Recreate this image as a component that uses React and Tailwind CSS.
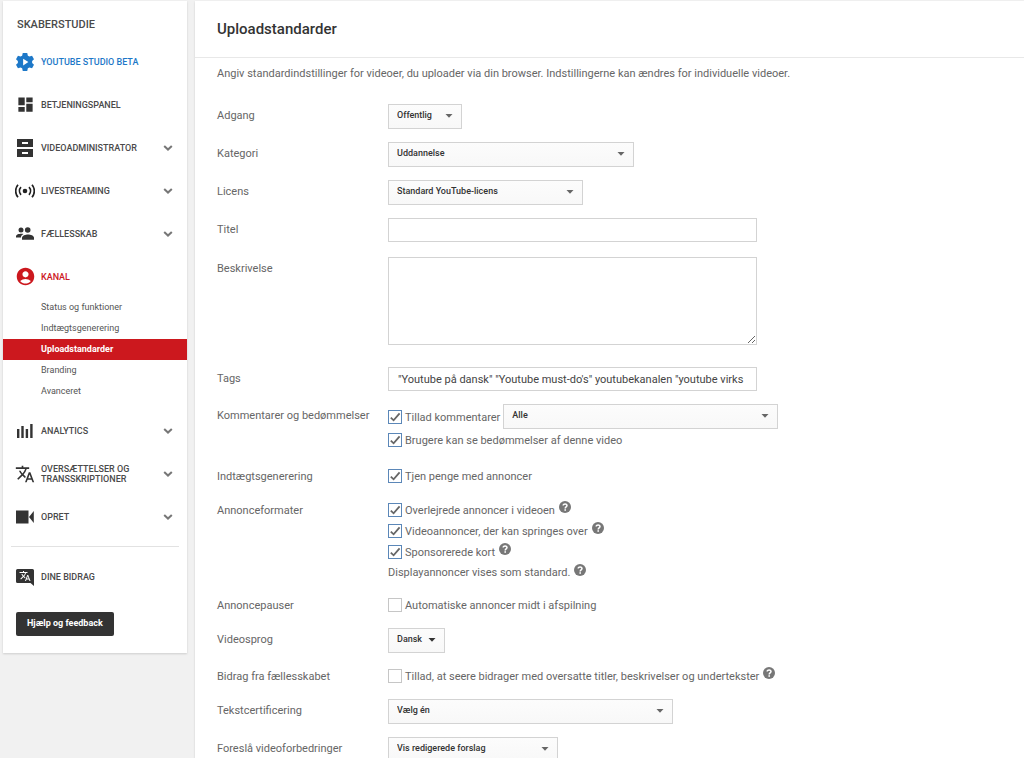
import { useState } from "react";
import { MdAccountCircle, MdDashboard, MdTranslate } from "react-icons/md";

function StudioIcon() {
  return (
    <svg viewBox="0 0 24 24" className="h-[18px] w-[18px]" fill="currentColor">
      <path fillRule="evenodd" d="M9 0h6l.8 3.600 2.100 1.200L21.400 3.700l2.600 4.600-2.500 2.500v2.400l2.500 2.500-2.600 4.600-3.500-1.100-2.100 1.200L15 24H9l-.8-3.600-2.100-1.200-3.500 1.100L0 15.700l2.500-2.500v-2.400L0 8.300l2.600-4.600 3.500 1.100 2.100-1.200zM9.500 7.500v9l7-4.500z" />
    </svg>
  );
}

function DrawersIcon() {
  return (
    <svg viewBox="0 0 18 18" className="h-[18px] w-[18px] text-[#333]" fill="currentColor">
      <path fillRule="evenodd" d="M1 0h16v8H1zM6 3v2h6V3zM1 10h16v8H1zM6 13v2h6v-2z" />
    </svg>
  );
}

function LiveIcon() {
  return (
    <svg viewBox="0 0 20 14" className="h-[14px] w-[20px] shrink-0 text-[#222]" fill="none" stroke="currentColor" strokeWidth="1.700">
      <circle cx="10" cy="7" r="2.300" fill="currentColor" stroke="none" />
      <path d="M6 3.200a5.600 5.600 0 0 0 0 7.600M14 3.200a5.600 5.600 0 0 1 0 7.600M3 .8a9.400 9.400 0 0 0 0 12.400M17 .8a9.400 9.400 0 0 1 0 12.400" />
    </svg>
  );
}

function PeopleIcon() {
  return (
    <svg viewBox="0 0 18 13" className="h-[13px] w-[18px] text-[#333]" fill="currentColor">
      <circle cx="5" cy="3" r="2.500" />
      <circle cx="11.700" cy="3" r="2.800" />
      <path d="M0 10.500V9.300C0 7.600 3 6.800 5.200 6.800c.8 0 1.600.1 2.300.3C5.900 7.900 5 9 5 10.500z" />
      <path d="M6 12.800v-2C6 8.600 9.500 7.400 12 7.400s6 1.200 6 3.400v2z" />
    </svg>
  );
}

function BarsIcon() {
  return (
    <svg viewBox="0 0 18 14" className="h-[14px] w-[18px] text-[#333]" fill="currentColor">
      <path d="M1 5h2.400v9H1zM5.300 2h2.400v12H5.300zM9.700 5h2.400v9H9.700zM14.200 0h2.400v14h-2.400z" />
    </svg>
  );
}

function CameraIcon() {
  return (
    <svg viewBox="0 0 18 14" className="h-[14px] w-[18px] text-[#333]" fill="currentColor">
      <path d="M0 .5h12.500v13H0zM13 7l4.800-6v12z" />
    </svg>
  );
}

function ContributionIcon() {
  return (
    <span className="relative block h-[18px] w-[18px] text-[#333]">
      <svg viewBox="0 0 18 18" className="h-[18px] w-[18px]" fill="currentColor">
        <path d="M1.500 1h15A1.500 1.500 0 0 1 18 2.500V18l-3.500-3h-13A1.500 1.500 0 0 1 0 13.500v-11A1.500 1.500 0 0 1 1.500 1z" />
      </svg>
      <MdTranslate className="absolute left-[3px] top-[2px] h-3 w-3 text-white" />
    </span>
  );
}

function Chevron() {
  return (
    <svg viewBox="0 0 10 6" className="ml-auto h-[6px] w-[10px] shrink-0" fill="none" stroke="#777" strokeWidth="2">
      <path d="M1.200 1l3.800 3.600L8.800 1" />
    </svg>
  );
}

function NavItem({ icon, label, expandable, className = "text-[#4a4a4a]" }) {
  return (
    <a href="#" className={`flex h-[43px] items-center pl-[13px] pr-[14px] ${className}`}>
      <span className="mr-[7px] flex w-[18px] shrink-0 justify-center">{icon}</span>
      <span className="text-[9px] font-medium leading-[10px]">{label}</span>
      {expandable && <Chevron />}
    </a>
  );
}

const channelPages = ["Status og funktioner", "Indtægtsgenerering", "Uploadstandarder", "Branding", "Avanceret"];

function Sidebar() {
  return (
    <nav className="ml-[3px] mt-px w-[184px] shrink-0 self-start bg-white pb-[17px] shadow-[0_1px_2px_rgba(0,0,0,0.15)]">
      <h2 className="flex h-[39px] items-center pl-[14px] pt-[10px] text-[11px] font-medium text-[#4a4a4a]">SKABERSTUDIE</h2>
      <NavItem icon={<StudioIcon />} label="YOUTUBE STUDIO BETA" className="text-[#1d78c8]" />
      <NavItem icon={<MdDashboard className="h-[19px] w-[19px] shrink-0 text-[#333]" />} label="BETJENINGSPANEL" />
      <NavItem icon={<DrawersIcon />} label="VIDEOADMINISTRATOR" expandable />
      <NavItem icon={<LiveIcon />} label="LIVESTREAMING" expandable />
      <NavItem icon={<PeopleIcon />} label="FÆLLESSKAB" expandable />
      <NavItem icon={<MdAccountCircle className="h-[21px] w-[21px] shrink-0" />} label="KANAL" className="text-[#cc181e]" />
      <ul className="-mt-px mb-[7px]">
        {channelPages.map((page) => (
          <li key={page}>
            <a
              href="#"
              className={`block h-[21px] pl-[38px] text-[9px] leading-[21px] ${
                page === "Uploadstandarder" ? "bg-[#cc181e] font-bold text-white" : "text-[#555]"
              }`}
            >
              {page}
            </a>
          </li>
        ))}
      </ul>
      <NavItem icon={<BarsIcon />} label="ANALYTICS" expandable />
      <NavItem icon={<MdTranslate className="h-[20px] w-[20px] shrink-0 text-[#333]" />} label="OVERSÆTTELSER OG TRANSSKRIPTIONER" expandable />
      <NavItem icon={<CameraIcon />} label="OPRET" expandable />
      <hr className="mx-2 my-2 border-[#e2e2e2]" />
      <NavItem icon={<ContributionIcon />} label="DINE BIDRAG" />
      <button className="ml-[13px] mt-[14px] block h-6 rounded-[2px] bg-[#333] px-[11px] text-[9px] font-bold text-white">Hjælp og feedback</button>
    </nav>
  );
}

function Row({ label, htmlFor, className = "mt-[13px]", children }) {
  return (
    <div className={`flex items-start ${className}`}>
      <label htmlFor={htmlFor} className="w-[171px] shrink-0 leading-6">{label}</label>
      <div>{children}</div>
    </div>
  );
}

function Select({ id, value, label, className, arrow = "text-[#666]" }) {
  return (
    <div className={`relative h-[25px] ${className}`}>
      <select
        id={id}
        aria-label={label}
        className="block h-full w-full appearance-none border border-[#d3d3d3] bg-linear-to-b from-[#fcfcfc] to-[#f8f8f8] pb-px pl-2 text-[9px] font-medium text-[#333]"
      >
        <option>{value}</option>
      </select>
      <svg viewBox="0 0 8 4" className={`pointer-events-none absolute right-[9px] top-[10px] h-1 w-2 ${arrow}`} fill="currentColor">
        <path d="M.5 0h7L4 3.700z" />
      </svg>
    </div>
  );
}

function Check({ id, label, initial = false }) {
  const [checked, setChecked] = useState(initial);
  return (
    <label className="flex items-center gap-[3px]">
      <span className="relative block h-[14px] w-[14px]">
        <input
          id={id}
          type="checkbox"
          checked={checked}
          onChange={() => setChecked(!checked)}
          className="block h-[14px] w-[14px] appearance-none border border-[#c6c6c6] bg-white checked:border-[#5b87b8]"
        />
        {checked && (
          <svg viewBox="0 0 14 14" className="pointer-events-none absolute inset-0 h-[14px] w-[14px]" fill="none" stroke="#666" strokeWidth="1.800">
            <path d="M2.800 7.600l2.800 2.700 6-7" />
          </svg>
        )}
      </span>
      <span className="pt-[2px] leading-4">{label}</span>
    </label>
  );
}

function Help() {
  return (
    <button aria-label="Hjælp" className="mt-[2px] flex h-3 w-3 shrink-0 items-center justify-center self-start">
      <svg viewBox="0 0 12 12" className="h-3 w-3">
        <circle cx="6" cy="6" r="6" fill="#777" />
        <path d="M4.200 4.600C4.200 2.300 8 2.400 8 4.600 8 6 6.200 5.900 6.200 7.400" fill="none" stroke="#fff" strokeWidth="1.500" />
        <path d="M5.400 8.300h1.600v1.500H5.400z" fill="#fff" />
      </svg>
    </button>
  );
}

function Line({ children }) {
  return <div className="flex h-[21px] items-center gap-1">{children}</div>;
}

export default function App() {
  return (
    <div className="flex h-screen overflow-hidden bg-[#f1f1f1] font-['Roboto',sans-serif] text-[11px] text-[#666]">
      <Sidebar />
      <main className="ml-2 mt-px flex-1 self-stretch bg-white shadow-[0_1px_2px_rgba(0,0,0,0.15)]">
        <header className="flex h-[57px] items-center border-b border-[#e8e8e8] pl-[22px]">
          <h1 className="text-[15px] font-medium text-[#333]">Uploadstandarder</h1>
        </header>
        <form className="pl-[22px]" onSubmit={(e) => e.preventDefault()}>
          <p className="pb-[22px] pt-[7px] leading-[17px]">
            Angiv standardindstillinger for videoer, du uploader via din browser. Indstillingerne kan ændres for individuelle videoer.
          </p>
          <Row label="Adgang" htmlFor="privacy" className="">
            <Select id="privacy" value="Offentlig" className="w-[74px]" />
          </Row>
          <Row label="Kategori" htmlFor="category">
            <Select id="category" value="Uddannelse" className="w-[246px]" />
          </Row>
          <Row label="Licens" htmlFor="license">
            <Select id="license" value="Standard YouTube-licens" className="w-[195px]" />
          </Row>
          <Row label="Titel" htmlFor="title">
            <input id="title" className="block h-6 w-[369px] border border-[#d3d3d3] px-[9px] text-[#444]" />
          </Row>
          <Row label="Beskrivelse" htmlFor="description" className="mt-[15px]">
            <textarea id="description" className="block h-[88px] w-[369px] border border-[#d3d3d3] px-[9px] text-[#444]" />
          </Row>
          <Row label="Tags" htmlFor="tags" className="mt-[22px]">
            <input
              id="tags"
              defaultValue={'"Youtube på dansk" "Youtube must-do\'s" youtubekanalen "youtube virks'}
              className="block h-6 w-[369px] border border-[#d3d3d3] px-[9px] text-[#444]"
            />
          </Row>
          <Row label="Kommentarer og bedømmelser" htmlFor="comments">
            <div className="flex items-center gap-[3px]">
              <Check id="comments" label="Tillad kommentarer" initial />
              <Select value="Alle" label="Kommentarer" className="w-[275px]" />
            </div>
            <Line><Check label="Brugere kan se bedømmelser af denne video" initial /></Line>
          </Row>
          <Row label="Indtægtsgenerering" htmlFor="monetize" className="mt-[15px]">
            <Line><Check id="monetize" label="Tjen penge med annoncer" initial /></Line>
          </Row>
          <Row label="Annonceformater" htmlFor="overlay" className="mt-[10px]">
            <Line><Check id="overlay" label="Overlejrede annoncer i videoen" initial /><Help /></Line>
            <Line><Check label="Videoannoncer, der kan springes over" initial /><Help /></Line>
            <Line><Check label="Sponsorerede kort" initial /><Help /></Line>
            <Line><span className="pt-px">Displayannoncer vises som standard.</span><Help /></Line>
          </Row>
          <Row label="Annoncepauser" htmlFor="midroll" className="mt-[11px]">
            <Line><Check id="midroll" label="Automatiske annoncer midt i afspilning" /></Line>
          </Row>
          <Row label="Videosprog" htmlFor="language" className="mt-[10px]">
            <Select id="language" value="Dansk" className="w-[57px]" arrow="text-[#333]" />
          </Row>
          <Row label="Bidrag fra fællesskabet" htmlFor="community" className="mt-[12px]">
            <Line><Check id="community" label="Tillad, at seere bidrager med oversatte titler, beskrivelser og undertekster" /><Help /></Line>
          </Row>
          <Row label="Tekstcertificering" htmlFor="certification" className="mt-[10px]">
            <Select id="certification" value="Vælg én" className="w-[285px]" />
          </Row>
          <Row label="Foreslå videoforbedringer" htmlFor="enhancements">
            <Select id="enhancements" value="Vis redigerede forslag" className="w-[170px]" />
          </Row>
        </form>
      </main>
    </div>
  );
}
